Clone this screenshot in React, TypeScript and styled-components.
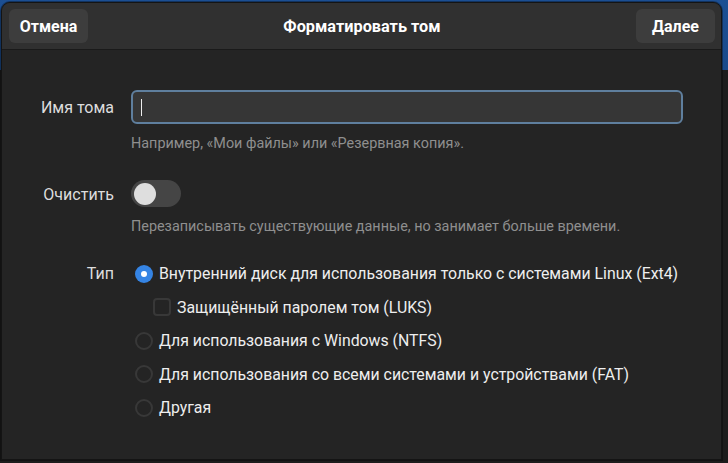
import React, { useState } from "react";
import styled, { createGlobalStyle } from "styled-components";

const GlobalStyle = createGlobalStyle`
  html, body {
    margin: 0;
    padding: 0;
    background: #1c1c1c;
  }
  body {
    font-family: Roboto, "Noto Sans", "DejaVu Sans", sans-serif;
  }
`;

const Desktop = styled.div`
  width: 728px;
  height: 463px;
  overflow: hidden;
  background: linear-gradient(180deg, #1c4f93 0px, #1a4a8a 70px, #1c1c1c 70px);
  padding: 2px 6px 5px 1px;
  box-sizing: border-box;
`;

const Window = styled.div`
  height: 100%;
  background: #242424;
  border: 1px solid #141414;
  border-radius: 9px 9px 0 0;
  box-shadow: 0 0 0 1px rgba(0, 0, 0, 0.35);
  display: flex;
  flex-direction: column;
  overflow: hidden;
  color: #eeeeee;
`;

const HeaderBar = styled.div`
  height: 46px;
  flex: none;
  background: #303030;
  border-bottom: 1px solid #1a1a1a;
  display: flex;
  align-items: center;
  justify-content: space-between;
  padding: 0 6px 0 7px;
`;

const HeaderButton = styled.button`
  height: 34px;
  min-width: 79px;
  padding: 0 10px;
  border: none;
  border-radius: 6px;
  background: #3d3d3d;
  color: #ffffff;
  font-family: inherit;
  font-size: 16px;
  font-weight: 700;
`;

const Title = styled.div`
  font-size: 16.3px;
  font-weight: 700;
  color: #ffffff;
`;

const Content = styled.div`
  display: grid;
  grid-template-columns: 112px 1fr;
  column-gap: 17px;
  padding: 40px 38px 0 0;
  align-items: start;
`;

const Label = styled.div<{ $top: number }>`
  text-align: right;
  font-size: 16px;
  color: #dddddd;
  padding-top: ${(p) => p.$top}px;
`;

const Field = styled.div<{ $bottom: number }>`
  display: flex;
  flex-direction: column;
  align-items: flex-start;
  margin-bottom: ${(p) => p.$bottom}px;
`;

const Entry = styled.div`
  width: 100%;
  height: 34px;
  box-sizing: border-box;
  border: 2px solid #5f7f9e;
  border-radius: 6px;
  background: #363636;
  display: flex;
  align-items: center;
  padding-left: 8px;
`;

const Caret = styled.span`
  width: 1px;
  height: 17px;
  background: #eeeeee;
`;

const Hint = styled.div<{ $gap: number }>`
  font-size: 14.4px;
  color: #8f8f8f;
  margin-top: ${(p) => p.$gap}px;
`;

const Switch = styled.div<{ $on: boolean }>`
  width: 50px;
  height: 27px;
  border-radius: 14px;
  background: ${(p) => (p.$on ? "#3584e4" : "#454545")};
  display: flex;
  align-items: center;
  justify-content: ${(p) => (p.$on ? "flex-end" : "flex-start")};
  padding: 0 3px;
  box-sizing: border-box;
`;

const Knob = styled.div`
  width: 22px;
  height: 22px;
  border-radius: 50%;
  background: #dedede;
`;

const Options = styled.div`
  display: flex;
  flex-direction: column;
  padding-left: 4px;
`;

const OptionRow = styled.div<{ $indent?: boolean }>`
  display: flex;
  align-items: center;
  height: 33.5px;
  gap: 6px;
  padding-left: ${(p) => (p.$indent ? "18px" : "0")};
  font-size: 15.85px;
  color: #eeeeee;
  white-space: nowrap;
`;

const Radio = styled.span<{ $checked: boolean }>`
  width: 18px;
  height: 18px;
  box-sizing: border-box;
  border-radius: 50%;
  flex: none;
  border: ${(p) => (p.$checked ? "none" : "2px solid #383838")};
  background: ${(p) => (p.$checked ? "#3584e4" : "transparent")};
  display: flex;
  align-items: center;
  justify-content: center;
  &::after {
    content: "";
    display: ${(p) => (p.$checked ? "block" : "none")};
    width: 6px;
    height: 6px;
    border-radius: 50%;
    background: #ffffff;
  }
`;

const Check = styled.span`
  width: 18px;
  height: 18px;
  box-sizing: border-box;
  border-radius: 4px;
  border: 2px solid #383838;
  flex: none;
`;

const types = [
  "Внутренний диск для использования только с системами Linux (Ext4)",
  "Для использования с Windows (NTFS)",
  "Для использования со всеми системами и устройствами (FAT)",
  "Другая",
];

export default function App() {
  const [selected, setSelected] = useState(0);
  const [erase, setErase] = useState(false);

  return (
    <>
      <GlobalStyle />
      <Desktop>
        <Window>
          <HeaderBar>
            <HeaderButton>Отмена</HeaderButton>
            <Title>Форматировать том</Title>
            <HeaderButton>Далее</HeaderButton>
          </HeaderBar>
          <Content>
            <Label $top={8}>Имя тома</Label>
            <Field $bottom={28}>
              <Entry>
                <Caret />
              </Entry>
              <Hint $gap={11}>Например, «Мои файлы» или «Резервная копия».</Hint>
            </Field>

            <Label $top={5}>Очистить</Label>
            <Field $bottom={22}>
              <Switch $on={erase} onClick={() => setErase(!erase)}>
                <Knob />
              </Switch>
              <Hint $gap={11}>Перезаписывать существующие данные, но занимает больше времени.</Hint>
            </Field>

            <Label $top={7}>Тип</Label>
            <Options>
              <OptionRow onClick={() => setSelected(0)}>
                <Radio $checked={selected === 0} />
                {types[0]}
              </OptionRow>
              <OptionRow $indent>
                <Check />
                Защищённый паролем том (LUKS)
              </OptionRow>
              {types.slice(1).map((t, i) => (
                <OptionRow key={t} onClick={() => setSelected(i + 1)}>
                  <Radio $checked={selected === i + 1} />
                  {t}
                </OptionRow>
              ))}
            </Options>
          </Content>
        </Window>
      </Desktop>
    </>
  );
}
